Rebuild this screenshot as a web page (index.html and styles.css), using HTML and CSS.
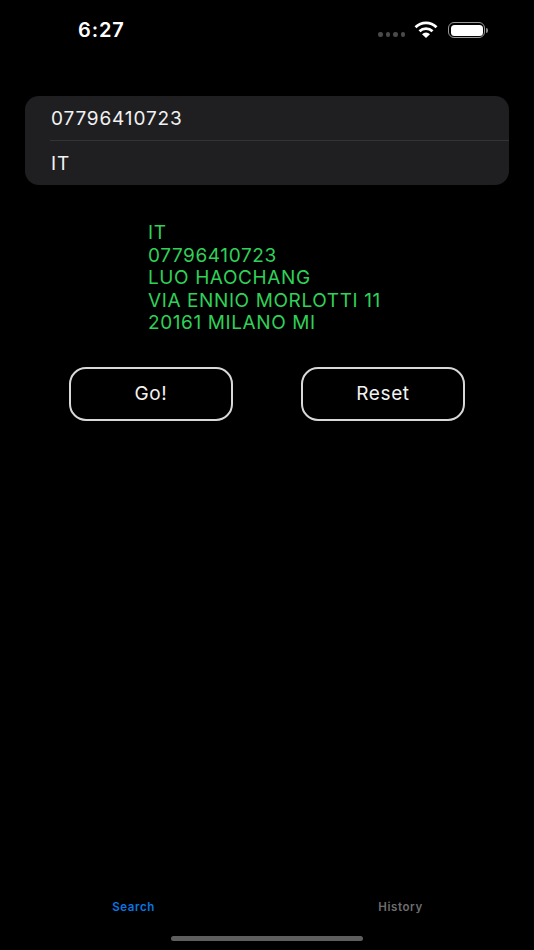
FILE: index.html
```html
<!DOCTYPE html>
<html lang="en">
<head>
<meta charset="utf-8">
<title>Search</title>
<link rel="stylesheet" href="styles.css">
</head>
<body>
<div class="screen">
  <header class="status">
    <span class="time">6:27</span>
    <div class="status-icons">
      <div class="dots"><i></i><i></i><i></i><i></i></div>
      <svg class="wifi" width="24" height="17" viewBox="0 0 24 17">
        <path d="M1.5 6.2A15 15 0 0 1 22.5 6.2" fill="none" stroke="#fff" stroke-width="2.8"/>
        <path d="M5.5 10.2A9.5 9.5 0 0 1 18.5 10.2" fill="none" stroke="#fff" stroke-width="2.8"/>
        <path d="M8 13.2A5.6 5.6 0 0 1 16 13.2L12 17Z" fill="#fff"/>
      </svg>
      <div class="battery"><div class="battery-fill"></div></div>
      <div class="battery-cap"></div>
    </div>
  </header>

  <section class="form">
    <div class="field">07796410723</div>
    <div class="divider"></div>
    <div class="field">IT</div>
  </section>

  <section class="result">
    <div>IT</div>
    <div>07796410723</div>
    <div>LUO HAOCHANG</div>
    <div>VIA ENNIO MORLOTTI 11</div>
    <div>20161 MILANO MI</div>
  </section>

  <section class="actions">
    <button class="btn">Go!</button>
    <button class="btn">Reset</button>
  </section>

  <nav class="tabs">
    <span class="tab active">Search</span>
    <span class="tab">History</span>
  </nav>
  <div class="home"></div>
</div>
</body>
</html>
```
FILE: styles.css
```css
* { box-sizing: border-box; }
html, body { margin: 0; padding: 0; background: #000; }
.screen {
  width: 534px;
  height: 950px;
  display: flex;
  flex-direction: column;
  background: #000;
  color: #fff;
  font-family: Inter, "Liberation Sans", sans-serif;
  overflow: hidden;
}
.status {
  height: 96px;
  flex: none;
  display: flex;
  justify-content: space-between;
  align-items: flex-start;
  padding: 18px 46px 0 78px;
}
.time { font-size: 20px; line-height: 24px; font-weight: 600; letter-spacing: 0.9px; }
.status-icons { display: flex; align-items: center; height: 24px; }
.dots { display: flex; gap: 3px; margin-right: 9px; margin-top: 9px; }
.dots i { width: 4.5px; height: 4.5px; border-radius: 50%; background: #4a4a4a; display: block; }
.wifi { margin-right: 10px; margin-top: -1px; }
.battery {
  width: 37px; height: 16px; border: 1.5px solid #9a9a9a; border-radius: 6px; padding: 1.5px;
}
.battery-fill { width: 100%; height: 100%; background: #fff; border-radius: 3.5px; }
.battery-cap { width: 2px; height: 5px; background: #8a8a8a; border-radius: 0 2px 2px 0; margin-left: 1px; }
.form {
  margin: 0 25px;
  height: 89px;
  flex: none;
  background: #1f1f21;
  border-radius: 14px;
  display: flex;
  flex-direction: column;
  padding-left: 26px;
}
.field {
  flex: 1;
  display: flex;
  align-items: center;
  font-size: 19px;
  letter-spacing: 0.85px;
  color: #f2f2f2;
}
.divider { height: 1px; background: #343436; flex: none; margin-left: -1px; }
.result {
  margin-top: 37px;
  padding-left: 148px;
  font-size: 19px;
  line-height: 22.6px;
  letter-spacing: 0.6px;
  color: #2fd158;
  flex: none;
}
.actions {
  margin-top: 32px;
  padding: 0 69px;
  display: flex;
  justify-content: space-between;
  flex: none;
}
.btn {
  width: 164px;
  height: 54px;
  background: #000;
  color: #f2f2f2;
  border: 2px solid #d8d8d8;
  border-radius: 17px;
  font-family: inherit;
  font-size: 19px;
  letter-spacing: 0.6px;
}
.tabs {
  margin-top: auto;
  height: 24px;
  flex: none;
  display: grid;
  grid-template-columns: 267px 267px;
  align-items: center;
  justify-items: center;
}
.tab { font-size: 11.5px; font-weight: 600; letter-spacing: 0.6px; color: #6e6e6e; }
.tab.active { color: #0a76e0; }
.home {
  flex: none;
  width: 192px;
  height: 5px;
  margin: 17px auto 9px;
  border-radius: 3px;
  background: #5e5e5e;
}
```
